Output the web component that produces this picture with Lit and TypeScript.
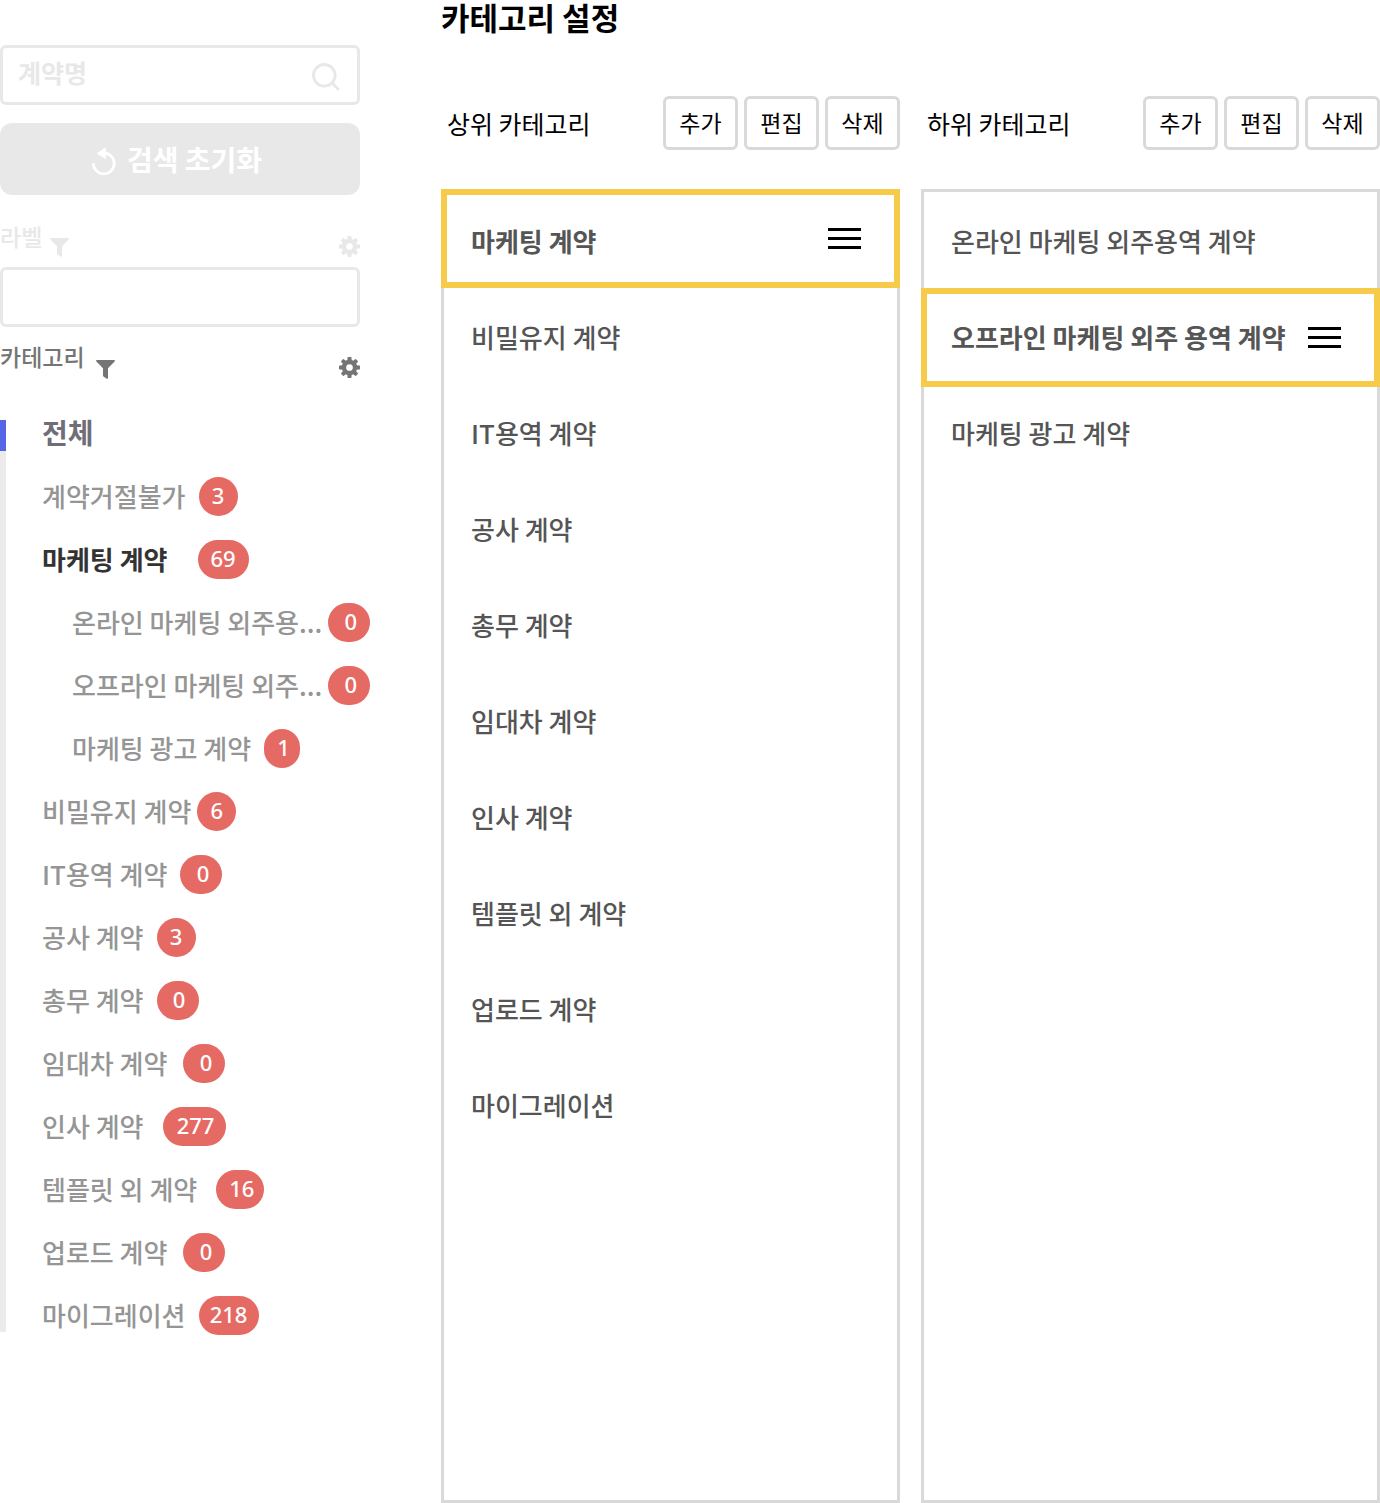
import { LitElement, html, css, svg } from "lit";
import { customElement, property, state } from "lit/decorators.js";
import { classMap } from "lit/directives/class-map.js";

interface Category {
  name: string;
  count: number;
  /** space between the label and its badge */
  gap: "xs" | "s" | "m" | "l" | "xl";
  /** badge width step */
  size: number;
  /** badge whose number leans to the right */
  lean?: boolean;
  child?: boolean;
  current?: boolean;
}

const CATEGORIES: Category[] = [
  { name: "계약거절불가", count: 3, gap: "s", size: 39 },
  { name: "마케팅 계약", count: 69, gap: "xl", size: 51, current: true },
  { name: "온라인 마케팅 외주용...", count: 0, gap: "xs", size: 42, lean: true, child: true },
  { name: "오프라인 마케팅 외주...", count: 0, gap: "xs", size: 42, lean: true, child: true },
  { name: "마케팅 광고 계약", count: 1, gap: "s", size: 36, lean: true, child: true },
  { name: "비밀유지 계약", count: 6, gap: "xs", size: 39 },
  { name: "IT용역 계약", count: 0, gap: "s", size: 42, lean: true },
  { name: "공사 계약", count: 3, gap: "s", size: 39 },
  { name: "총무 계약", count: 0, gap: "s", size: 42, lean: true },
  { name: "임대차 계약", count: 0, gap: "m", size: 42, lean: true },
  { name: "인사 계약", count: 277, gap: "l", size: 63, lean: true },
  { name: "템플릿 외 계약", count: 16, gap: "l", size: 48, lean: true },
  { name: "업로드 계약", count: 0, gap: "m", size: 42, lean: true },
  { name: "마이그레이션", count: 218, gap: "s", size: 60 },
];

const FONT = css`"Noto Sans CJK KR", sans-serif`;

const reset = css`
  * { box-sizing: border-box; }
  button, input { font: inherit; color: inherit; margin: 0; padding: 0; background: none; border: 0; }
  button { cursor: pointer; }
  ul { list-style: none; margin: 0; padding: 0; }
  svg { display: block; }
`;

const tooth = [0, 45, 90, 135, 180, 225, 270, 315];
const gearIcon = html`<svg width="21" height="21" viewBox="0 0 22 22" aria-hidden="true">
  <g fill="currentColor">
    ${tooth.map((a) => svg`<path d="M8.6 5 9 .6Q9.1 0 9.8 0h2.4q.7 0 .8.6L13.4 5Z" transform="rotate(${a} 11 11)" />`)}
  </g>
  <circle cx="11" cy="11" r="5.8" fill="none" stroke="currentColor" stroke-width="4.6" />
</svg>`;

const filterIcon = html`<svg width="19" height="19" viewBox="0 0 19 19" aria-hidden="true">
  <path d="M.6 0h17.8q.8.6.2 1.5L12 8.2V18.4q-.5.6-1.2.3L7.4 16.4Q7 16 7 15.6V8.2L.4 1.5Q-.2.6.6 0Z" fill="currentColor" />
</svg>`;

@customElement("category-sidebar")
export class CategorySidebar extends LitElement {
  static styles = [
    reset,
    css`
      :host { display: block; padding-top: 45px; }
      .search {
        display: flex; align-items: center; height: 60px; padding: 0 17px 2px 15px;
        border: 3px solid #e8e8e8; border-radius: 6px; color: #e8e8e8;
      }
      .search input { flex: 1; min-width: 0; height: 42px; padding-bottom: 4px; font-size: 25px; font-weight: 700; outline: 0; }
      .search input::placeholder { color: #e8e8e8; opacity: 1; }
      .search svg { margin-top: 6px; }
      .reset {
        display: flex; align-items: center; justify-content: center; gap: 11px;
        width: 100%; height: 72px; margin-top: 18px; padding: 0 6px 0 0;
        border-radius: 12px; background: #e8e8e8; color: #fff;
        font-size: 28px; font-weight: 700; line-height: 40px;
      }
      .reset svg { margin-top: 4px; }
      .heading { display: flex; align-items: flex-start; height: 60px; font-size: 23px; font-weight: 500; color: #757575; line-height: 58px; }
      .heading.off { margin-top: 12px; color: #e8e8e8; }
      .heading.wide { height: 75px; }
      .filter { margin: 31px 0 0 8px; }
      .gear { margin: 29px 0 0 auto; }
      .wide .filter { margin: 33px 0 0 11px; }
      .wide .gear { margin-top: 30px; }
      .field { display: block; width: 100%; height: 60px; padding: 0 15px; border: 3px solid #e8e8e8; border-radius: 6px; font-size: 25px; }
      .tree { display: flex; margin-right: -24px; }
      .rail { flex: none; width: 6px; margin: 18px 0 15px; background: #ebebeb; }
      .rail::before { content: ""; display: block; height: 31px; background: #5664e8; }
      .items { flex: 1; padding-left: 36px; }
      .item { display: flex; align-items: center; height: 63px; color: #959595; font-size: 26px; font-weight: 500; line-height: 38px; white-space: nowrap; }
      .item.all { padding-bottom: 3px; color: #6f6d78; font-size: 28px; font-weight: 700; }
      .item.current { color: #333; font-weight: 700; }
      .item.child { padding-left: 30px; }
      .name { padding-bottom: 2px; }
      .badge {
        height: 39px; border-radius: 20px; background: #e66a64; color: #fff;
        font-family: "Noto Sans", sans-serif; font-size: 22px; font-weight: 500; line-height: 36px; text-align: center;
      }
      .lean { padding-left: 3px; }
      .xs { gap: 6px; } .s { gap: 13px; } .m { gap: 16px; } .l { gap: 19px; } .xl { gap: 30px; }
    `,
  ];

  render() {
    return html`
      <label class="search">
        <input type="search" placeholder="계약명" aria-label="계약명" />
        <svg width="28" height="28" viewBox="0 0 28 28" fill="none" stroke="currentColor" stroke-width="2.8" aria-hidden="true">
          <circle cx="12.3" cy="12.3" r="10.8" /><path d="m19.8 19.8 7 7" />
        </svg>
      </label>
      <button class="reset" type="button">
        <svg width="24" height="28" viewBox="0 0 24 28" aria-hidden="true">
          <path d="M1.4 16.2A10.4 10.4 0 1 0 12 6" fill="none" stroke="currentColor" stroke-width="2.8" />
          <path d="M4.5 6.4 13.8.2v12Z" fill="currentColor" />
        </svg>
        검색 초기화
      </button>
      <div class="heading off">
        <label for="label">라벨</label>
        <button class="filter" type="button" aria-label="라벨 필터">${filterIcon}</button>
        <button class="gear" type="button" aria-label="라벨 설정">${gearIcon}</button>
      </div>
      <input class="field" id="label" type="text" />
      <div class="heading wide">
        <span>카테고리</span>
        <button class="filter" type="button" aria-label="카테고리 필터">${filterIcon}</button>
        <button class="gear" type="button" aria-label="카테고리 설정">${gearIcon}</button>
      </div>
      <div class="tree">
        <div class="rail"></div>
        <ul class="items">
          <li class="item all">전체</li>
          ${CATEGORIES.map(
            (c) => html`<li class=${classMap({ item: true, current: !!c.current, child: !!c.child, [c.gap]: true })}>
              <span class="name">${c.name}</span>
              <span class=${classMap({ badge: true, lean: !!c.lean })} style="width:${c.size}px">${c.count}</span>
            </li>`,
          )}
        </ul>
      </div>
    `;
  }
}

@customElement("category-panel")
export class CategoryPanel extends LitElement {
  static styles = [
    reset,
    css`
      :host { display: flex; flex-direction: column; }
      .bar { display: flex; align-items: center; height: 54px; gap: 6px; padding-left: 6px; }
      h2 { margin: 0 auto 0 0; font-size: 25px; font-weight: 400; line-height: 38px; color: #000; }
      .action {
        width: 75px; height: 54px; padding-bottom: 2px; border: 3px solid #d9d9d9; border-radius: 6px;
        font-size: 23px; font-weight: 400; line-height: 32px; color: #000;
      }
      .list { flex: 1; margin-top: 39px; border: 3px solid #d9d9d9; }
      .row {
        display: flex; align-items: center; justify-content: space-between;
        width: 100%; height: 96px; padding: 2px 36px 0 27px;
        font-size: 26px; font-weight: 500; line-height: 38px; color: #555; text-align: left; white-space: nowrap;
      }
      .selected { position: relative; font-weight: 700; }
      .selected::after { content: ""; position: absolute; inset: 0 -3px -3px; border: 6px solid #f7cb4a; }
      .selected.first::after { inset: -3px -3px 0; }
      .first svg { margin-bottom: 6px; }
    `,
  ];

  @property() heading = "";
  @property({ attribute: false }) items: string[] = [];
  @property({ type: Number }) selected = 0;
  @state() private picked: number | null = null;

  render() {
    const active = this.picked ?? this.selected;
    return html`
      <div class="bar">
        <h2>${this.heading}</h2>
        ${["추가", "편집", "삭제"].map((t) => html`<button class="action" type="button">${t}</button>`)}
      </div>
      <ul class="list">
        ${this.items.map(
          (name, i) => html`<li>
            <button type="button" class=${classMap({ row: true, selected: i === active, first: i === 0 })} @click=${() => (this.picked = i)}>
              ${name}
              ${i === active
                ? html`<svg width="33" height="21" viewBox="0 0 33 21" aria-hidden="true"><path d="M0 0h33v3H0zM0 9h33v3H0zM0 18h33v3H0z" fill="#000" /></svg>`
                : ""}
            </button>
          </li>`,
        )}
      </ul>
    `;
  }
}

@customElement("app-root")
export class AppRoot extends LitElement {
  static styles = [
    reset,
    css`
      :host {
        display: grid; grid-template-columns: 360px minmax(0, 1fr); column-gap: 81px;
        min-height: 100vh; background: #fff; font-family: ${FONT};
      }
      main { display: flex; flex-direction: column; }
      h1 { margin: 0 0 62px; font-size: 31px; font-weight: 700; line-height: 34px; color: #000; }
      .panels { flex: 1; display: grid; grid-template-columns: repeat(2, minmax(0, 1fr)); gap: 21px; }
    `,
  ];

  render() {
    return html`
      <category-sidebar></category-sidebar>
      <main>
        <h1>카테고리 설정</h1>
        <div class="panels">
          <category-panel
            heading="상위 카테고리"
            .items=${["마케팅 계약", "비밀유지 계약", "IT용역 계약", "공사 계약", "총무 계약", "임대차 계약", "인사 계약", "템플릿 외 계약", "업로드 계약", "마이그레이션"]}
            .selected=${0}
          ></category-panel>
          <category-panel
            heading="하위 카테고리"
            .items=${["온라인 마케팅 외주용역 계약", "오프라인 마케팅 외주 용역 계약", "마케팅 광고 계약"]}
            .selected=${1}
          ></category-panel>
        </div>
      </main>
    `;
  }
}
